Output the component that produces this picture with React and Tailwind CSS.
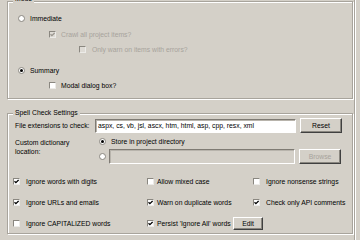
import React from "react";

// classic 3d edges
const raised =
  "border border-t-white border-l-white border-b-[#404040] border-r-[#404040] shadow-[inset_-1px_-1px_0_#8a8780]";
const sunken =
  "border border-t-[#7f7b74] border-l-[#7f7b74] border-b-white border-r-white shadow-[inset_1px_1px_0_#b8b4ac]";

function Check({ checked, disabled }) {
  return (
    <span
      className={`flex h-[7px] w-[7px] shrink-0 items-center justify-center border border-t-[#8a8780] border-l-[#8a8780] border-b-[#ecebe8] border-r-[#ecebe8] ${
        disabled ? "bg-[#dedbd5]" : "bg-white"
      }`}
    >
      {checked && (
        <svg width="5" height="5" viewBox="0 0 5 5">
          <path
            d="M0.5 2.2 L1.9 3.6 L4.6 0.9"
            stroke={disabled ? "#9a968f" : "#000"}
            strokeWidth="1.3"
            fill="none"
          />
        </svg>
      )}
    </span>
  );
}

function Radio({ checked }) {
  return (
    <span className="flex h-[7px] w-[7px] shrink-0 items-center justify-center rounded-full border border-[#8a8780] bg-white">
      {checked && <span className="h-[3px] w-[3px] rounded-full bg-black" />}
    </span>
  );
}

function Btn({ children, disabled, className }) {
  return (
    <div
      className={`flex items-center justify-center bg-[#d4d0c8] ${raised} ${
        disabled ? "text-[#a7a39c]" : "text-black"
      } ${className}`}
    >
      {children}
    </div>
  );
}

function GroupBox({ label, labelTop, className, children }) {
  return (
    <div
      className={`relative w-[346px] border border-[#a8a49c] shadow-[inset_1px_1px_0_#fff,1px_1px_0_#fff] ${className}`}
    >
      <span className={`absolute left-[5px] bg-[#d4d0c8] px-[2px] ${labelTop}`}>
        {label}
      </span>
      {children}
    </div>
  );
}

export default function App() {
  return (
    <div className="flex h-[240px] w-[360px] overflow-hidden bg-[#d4d0c8] font-['Liberation_Sans',Arial,sans-serif] text-[6.8px] leading-[9px] text-black">
      <div className="flex w-[354px] shrink-0 flex-col pl-[7px]">
        {/* Mode */}
        <GroupBox label="Mode" labelTop="top-[-8px]" className="mt-[1px] h-[98px]">
          <div className="flex flex-col pt-[10px]">
            <div className="flex h-[12px] items-center gap-[5px] pl-[10px]">
              <Radio />
              <span>Immediate</span>
            </div>
            <div className="mt-[4px] flex h-[12px] items-center gap-[5px] pl-[41px] text-[#a7a39c]">
              <Check checked disabled />
              <span>Crawl all project items?</span>
            </div>
            <div className="mt-[3px] flex h-[12px] items-center gap-[6px] pl-[71px] text-[#a7a39c]">
              <Check disabled />
              <span>Only warn on items with errors?</span>
            </div>
            <div className="mt-[9px] flex h-[12px] items-center gap-[5px] pl-[10px]">
              <Radio checked />
              <span>Summary</span>
            </div>
            <div className="mt-[3px] flex h-[12px] items-center gap-[5px] pl-[41px]">
              <Check />
              <span>Modal dialog box?</span>
            </div>
          </div>
        </GroupBox>

        {/* Spell Check Settings */}
        <GroupBox
          label="Spell Check Settings"
          labelTop="top-[-6px]"
          className="mt-[14px] h-[121px]"
        >
          <div className="flex flex-col pt-[4px]">
            <div className="flex h-[15px] items-center pl-[7px]">
              <span className="w-[80px] whitespace-nowrap">File extensions to check:</span>
              <div className={`flex h-[14px] w-[201px] items-center bg-white pl-[2px] whitespace-nowrap ${sunken}`}>
                aspx, cs, vb, jsl, ascx, htm, html, asp, cpp, resx, xml
              </div>
              <Btn className="ml-[4px] h-[15px] w-[42px]">Reset</Btn>
            </div>

            <div className="mt-[3px] flex pl-[7px]">
              <span className="w-[84px] pt-[2px]">
                Custom dictionary
                <br />
                location:
              </span>
              <div className="flex flex-col">
                <div className="flex h-[10px] items-center gap-[5px]">
                  <Radio checked />
                  <span>Store in project directory</span>
                </div>
                <div className="mt-[3px] flex h-[15px] items-center">
                  <Radio />
                  <div className={`ml-[3px] h-[15px] w-[186px] bg-[#d4d0c8] ${sunken}`} />
                  <Btn disabled className="ml-[4px] h-[15px] w-[42px]">
                    Browse
                  </Btn>
                </div>
              </div>
            </div>

            <div className="mt-[11px] grid h-[12px] grid-cols-[134px_106px_1fr] items-center pl-[5px]">
              <div className="flex items-center gap-[6px]">
                <Check checked />
                <span>Ignore words with digits</span>
              </div>
              <div className="flex items-center gap-[3px]">
                <Check />
                <span>Allow mixed case</span>
              </div>
              <div className="flex items-center gap-[6px]">
                <Check />
                <span>Ignore nonsense strings</span>
              </div>
            </div>

            <div className="mt-[9px] grid h-[12px] grid-cols-[134px_106px_1fr] items-center pl-[5px]">
              <div className="flex items-center gap-[6px]">
                <Check checked />
                <span>Ignore URLs and emails</span>
              </div>
              <div className="flex items-center gap-[3px]">
                <Check checked />
                <span>Warn on duplicate words</span>
              </div>
              <div className="flex items-center gap-[6px]">
                <Check checked />
                <span>Check only API comments</span>
              </div>
            </div>

            <div className="mt-[9px] grid h-[12px] grid-cols-[134px_1fr] items-center pl-[5px]">
              <div className="flex items-center gap-[6px]">
                <Check />
                <span>Ignore CAPITALIZED words</span>
              </div>
              <div className="flex items-center">
                <Check checked />
                <span className="ml-[3px] w-[76px] whitespace-nowrap">Persist 'Ignore All' words</span>
                <Btn className="h-[13px] w-[30px]">Edit</Btn>
              </div>
            </div>
          </div>
        </GroupBox>
      </div>
      <div className="h-full w-[1px] bg-[#a8a49c]" />
      <div className="h-full w-[1px] bg-white" />
    </div>
  );
}
